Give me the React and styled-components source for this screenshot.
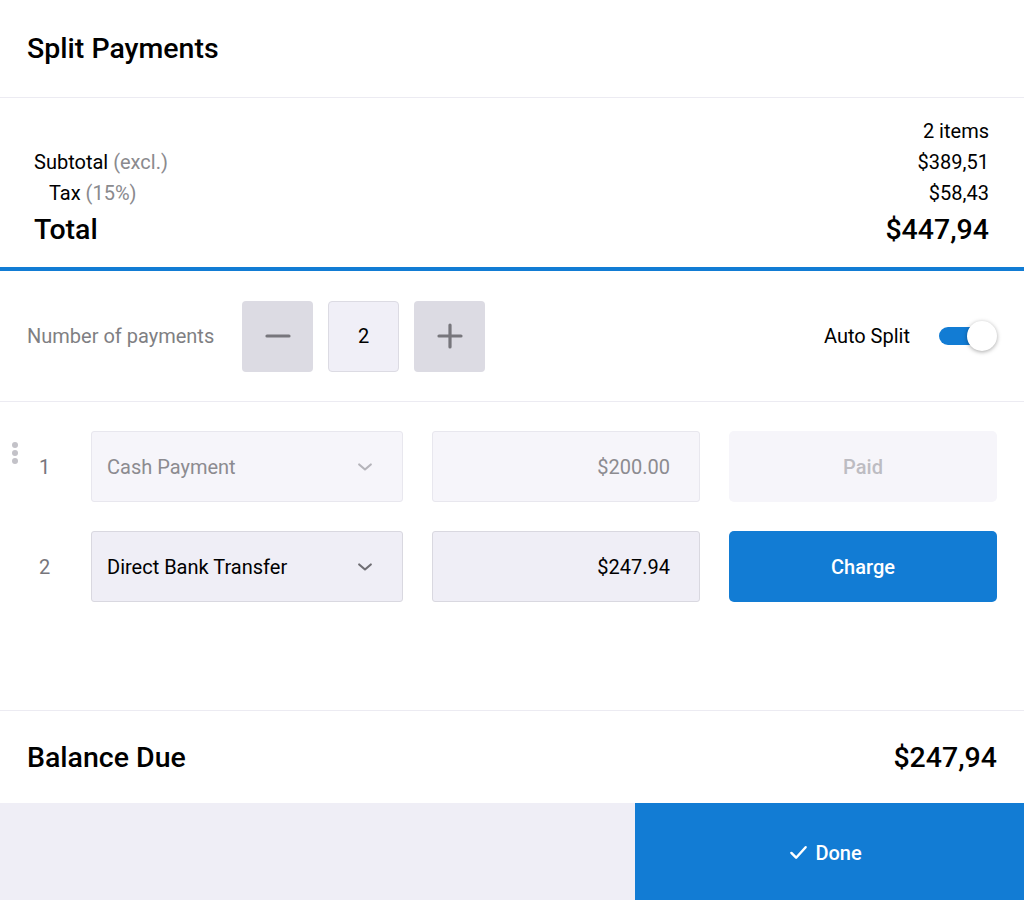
import React from "react";
import styled, { createGlobalStyle } from "styled-components";

const Global = createGlobalStyle`
  html, body { margin: 0; padding: 0; background: #fff; }
  body { font-family: Roboto, "Noto Sans", "Liberation Sans", sans-serif; color: #000; }
  * { box-sizing: border-box; }
`;

const BLUE = "#127cd4";

const Page = styled.div`
  width: 1024px;
  height: 900px;
  display: flex;
  flex-direction: column;
  overflow: hidden;
`;

const Header = styled.header`
  height: 98px;
  padding: 0 27px;
  display: flex;
  align-items: center;
  border-bottom: 1px solid #ecebf2;
`;

const Title = styled.h1`
  margin: 0;
  font-size: 28.5px;
  font-weight: 500;
`;

const Summary = styled.section`
  height: 173px;
  padding: 17px 35px 0 34px;
  border-bottom: 4px solid ${BLUE};
  display: flex;
  flex-direction: column;
`;

const SumRow = styled.div`
  display: flex;
  justify-content: space-between;
  align-items: center;
  height: ${(p) => p.$h || 31}px;
  font-size: ${(p) => p.$size || 20}px;
  font-weight: ${(p) => p.$weight || 400};
  padding-left: ${(p) => p.$indent || 0}px;
`;

const Muted = styled.span`
  color: #8a8a8e;
`;

const Controls = styled.section`
  height: 131px;
  padding: 0 27px;
  display: flex;
  align-items: center;
  justify-content: space-between;
  border-bottom: 1px solid #ecebf2;
`;

const Group = styled.div`
  display: flex;
  align-items: center;
`;

const Label = styled.span`
  font-size: 20px;
  color: ${(p) => (p.$dark ? "#000" : "#7f7f83")};
  margin-right: ${(p) => p.$gap || 0}px;
`;

const StepBtn = styled.button`
  width: 71px;
  height: 71px;
  border: none;
  border-radius: 4px;
  background: #dcdbe3;
  color: #77767c;
  display: flex;
  align-items: center;
  justify-content: center;
  margin: 0 ${(p) => p.$mr || 0}px 0 0;
  padding: 0;
`;

const StepValue = styled.div`
  width: 71px;
  height: 71px;
  border: 1px solid #dcdbe3;
  border-radius: 4px;
  background: #f0eff7;
  display: flex;
  align-items: center;
  justify-content: center;
  font-size: 20px;
  margin-right: 15px;
`;

const Toggle = styled.div`
  position: relative;
  width: 58px;
  height: 30px;
  display: flex;
  align-items: center;
`;

const Track = styled.div`
  width: 52px;
  height: 18px;
  border-radius: 9px;
  background: ${BLUE};
`;

const Knob = styled.div`
  position: absolute;
  right: 0;
  top: 0;
  width: 30px;
  height: 30px;
  border-radius: 50%;
  background: #fff;
  box-shadow: 0 1px 4px rgba(0, 0, 0, 0.35);
`;

const Rows = styled.section`
  flex: 1;
  padding: 29px 27px 0;
  display: flex;
  flex-direction: column;
  gap: 29px;
  border-bottom: 1px solid #ecebf2;
`;

const PayRow = styled.div`
  display: grid;
  grid-template-columns: 35px 312px 268px 268px;
  column-gap: 29px;
  height: 71px;
  align-items: stretch;
  position: relative;
`;

const Index = styled.div`
  display: flex;
  align-items: center;
  padding-left: 12px;
  font-size: 20px;
  color: #77767c;
`;

const Handle = styled.div`
  position: absolute;
  left: -15px;
  top: 11px;
  display: flex;
  flex-direction: column;
  gap: 2px;
  span {
    width: 6px;
    height: 6px;
    border-radius: 50%;
    background: #c3c2c8;
  }
`;

const Field = styled.div`
  border: 1px solid ${(p) => (p.$disabled ? "#e8e7ee" : "#d9d8e0")};
  background: ${(p) => (p.$disabled ? "#f6f5fa" : "#efeef6")};
  border-radius: 3px;
  display: flex;
  align-items: center;
  justify-content: ${(p) => (p.$right ? "flex-end" : "space-between")};
  padding: 0 ${(p) => (p.$right ? 29 : 27)}px 0 15px;
  font-size: 20px;
  color: ${(p) => (p.$disabled ? "#8c8b90" : "#000")};
`;

const Chevron = styled.span`
  display: flex;
  color: ${(p) => (p.$disabled ? "#b5b4ba" : "#6f6e74")};
`;

const ActionBtn = styled.button`
  border: none;
  border-radius: 5px;
  font-family: inherit;
  font-size: 20px;
  font-weight: 500;
  background: ${(p) => (p.$primary ? BLUE : "#f6f5fa")};
  color: ${(p) => (p.$primary ? "#fff" : "#bdbcc2")};
`;

const Balance = styled.section`
  height: 92px;
  padding: 0 27px;
  display: flex;
  align-items: center;
  justify-content: space-between;
  font-size: 28.5px;
  font-weight: 500;
`;

const Footer = styled.footer`
  height: 97px;
  display: flex;
`;

const FooterSpace = styled.div`
  flex: 0 0 635px;
  background: #efeef6;
`;

const DoneBtn = styled.button`
  flex: 1;
  border: none;
  background: ${BLUE};
  color: #fff;
  font-family: inherit;
  font-size: 20px;
  font-weight: 500;
  display: flex;
  align-items: center;
  justify-content: center;
  gap: 7px;
  padding: 2px 8px 0 0;
`;

const ChevronIcon = () => (
  <svg width="20" height="20" viewBox="0 0 24 24" fill="none" stroke="currentColor" strokeWidth="2.6" strokeLinecap="round" strokeLinejoin="round">
    <path d="M5 9l7 6 7-6" />
  </svg>
);

const MinusIcon = () => (
  <svg width="26" height="26" viewBox="0 0 26 26" stroke="currentColor" strokeWidth="3.2" strokeLinecap="round">
    <path d="M2 13h22" />
  </svg>
);

const PlusIcon = () => (
  <svg width="26" height="26" viewBox="0 0 26 26" stroke="currentColor" strokeWidth="3.2" strokeLinecap="round">
    <path d="M2 13h22M13 2v22" />
  </svg>
);

const CheckIcon = () => (
  <svg width="19" height="19" viewBox="0 0 20 20" fill="none" stroke="currentColor" strokeWidth="2.6" strokeLinecap="round" strokeLinejoin="round">
    <path d="M2.5 10.5l5 5 10-11" />
  </svg>
);

export default function App() {
  return (
    <Page>
      <Global />
      <Header>
        <Title>Split Payments</Title>
      </Header>
      <Summary>
        <SumRow>
          <span />
          <span>2 items</span>
        </SumRow>
        <SumRow>
          <span>
            Subtotal <Muted>(excl.)</Muted>
          </span>
          <span>$389,51</span>
        </SumRow>
        <SumRow $indent={15}>
          <span>
            Tax <Muted>(15%)</Muted>
          </span>
          <span>$58,43</span>
        </SumRow>
        <SumRow $h={42} $size={28.5} $weight={500}>
          <span>Total</span>
          <span>$447,94</span>
        </SumRow>
      </Summary>
      <Controls>
        <Group>
          <Label $gap={28}>Number of payments</Label>
          <StepBtn $mr={15} aria-label="decrease">
            <MinusIcon />
          </StepBtn>
          <StepValue>2</StepValue>
          <StepBtn aria-label="increase">
            <PlusIcon />
          </StepBtn>
        </Group>
        <Group>
          <Label $dark $gap={29}>Auto Split</Label>
          <Toggle>
            <Track />
            <Knob />
          </Toggle>
        </Group>
      </Controls>
      <Rows>
        <PayRow>
          <Handle>
            <span />
            <span />
            <span />
          </Handle>
          <Index>1</Index>
          <Field $disabled>
            Cash Payment
            <Chevron $disabled>
              <ChevronIcon />
            </Chevron>
          </Field>
          <Field $disabled $right>
            $200.00
          </Field>
          <ActionBtn>Paid</ActionBtn>
        </PayRow>
        <PayRow>
          <Index>2</Index>
          <Field>
            Direct Bank Transfer
            <Chevron>
              <ChevronIcon />
            </Chevron>
          </Field>
          <Field $right>$247.94</Field>
          <ActionBtn $primary>Charge</ActionBtn>
        </PayRow>
      </Rows>
      <Balance>
        <span>Balance Due</span>
        <span>$247,94</span>
      </Balance>
      <Footer>
        <FooterSpace />
        <DoneBtn>
          <CheckIcon />
          Done
        </DoneBtn>
      </Footer>
    </Page>
  );
}
